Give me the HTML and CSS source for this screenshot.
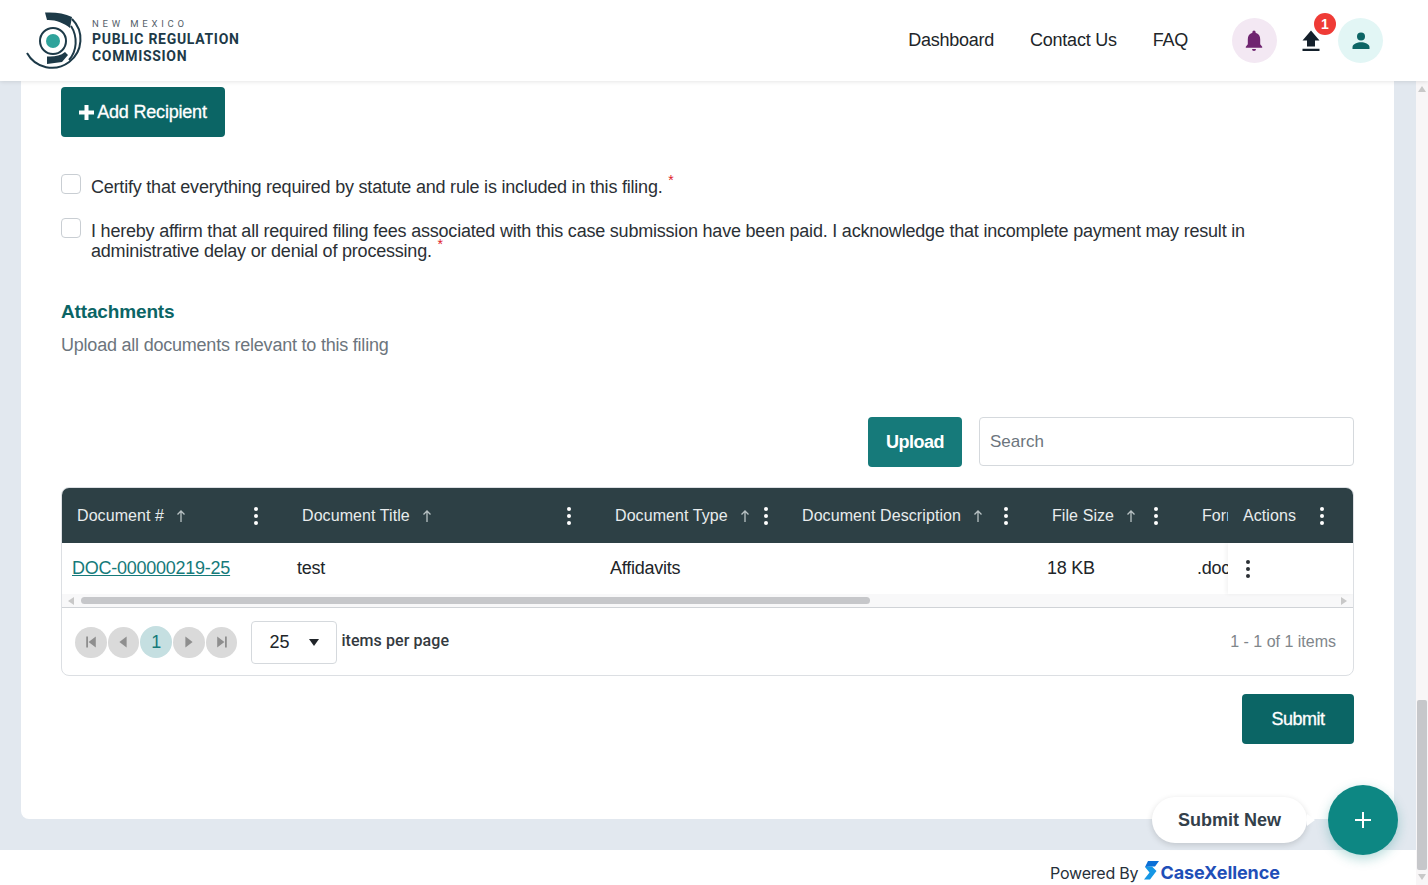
FILE: index.html
```html
<!DOCTYPE html>
<html lang="en">
<head>
    <meta charset="UTF-8">
    <title>Submit Filing</title>
    <link rel="stylesheet" href="styles.css">
</head>
<body>
<header class="topbar">
    <a class="logo" href="#">
        <svg class="logo-mark" width="60" height="60" viewBox="0 0 60 60" fill="none">
            <circle cx="28" cy="30" r="7" fill="#2fa39b"/>
            <circle cx="28" cy="30" r="13" stroke="#1d3a48" stroke-width="2"/>
            <path d="M20 1.500C30 1 39 2 47 6L45 17C39 12 30 8.500 22 9Z" fill="#1d3a48"/>
            <path d="M46 15C53 26 52 40 44 49" stroke="#1d3a48" stroke-width="2"/>
            <path d="M2 42A28.500 28.500 0 1 0 47 8" stroke="#1d3a48" stroke-width="2"/>
            <path d="M22 45.500C29 46 35 45 40 41L43 44L37 51L22 53Z" fill="#1d3a48"/>
        </svg>
        <span class="logo-text">
            <span class="logo-small">NEW MEXICO</span>
            <span class="logo-big">PUBLIC REGULATION</span>
            <span class="logo-big">COMMISSION</span>
        </span>
    </a>
    <nav class="nav">
        <a href="#">Dashboard</a>
        <a href="#">Contact Us</a>
        <a href="#">FAQ</a>
    </nav>
    <div class="tools">
        <span class="round round-bell">
            <svg width="20" height="22" viewBox="0 0 20 22"><path d="M10 0.500a1.600 1.600 0 0 1 1.600 1.600v.7c3 .8 4.600 3.300 4.600 6.400v5l2 2.600v1H1.800v-1l2-2.600v-5c0-3.100 1.600-5.600 4.600-6.400v-.7A1.600 1.600 0 0 1 10 .5zM8 19h4a2 2 0 0 1-4 0z" fill="#6f2470"/></svg>
        </span>
        <span class="upload">
            <svg width="20" height="22" viewBox="0 0 20 22"><path d="M10 .5L18.500 10.500H14V16.500H6V10.500H1.500ZM1.500 18.800H18.500V21H1.500Z" fill="#14202b"/></svg>
            <span class="badge">1</span>
        </span>
        <span class="round round-user">
            <svg width="20" height="20" viewBox="0 0 20 20"><circle cx="10" cy="5.500" r="4" fill="#0d6565"/><path d="M1.500 18v-2c0-3 5-4.700 8.500-4.700s8.500 1.700 8.500 4.700v2z" fill="#0d6565"/></svg>
        </span>
    </div>
</header>

<div class="page">
    <div class="page-main">
        <main class="content">
            <div class="card">
                <button class="btn btn-add">
                    <svg width="15" height="15" viewBox="0 0 15 15"><path d="M5.500 0H9.500V5.500H15V9.500H9.500V15H5.500V9.500H0V5.500H5.500Z" fill="#fff"/></svg>
                    Add Recipient
                </button>

                <label class="check">
                    <span class="box"></span>
                    <span>Certify that everything required by statute and rule is included in this filing. <sup class="req">*</sup></span>
                </label>
                <label class="check check-two">
                    <span class="box"></span>
                    <span>I hereby affirm that all required filing fees associated with this case submission have been paid. I acknowledge that incomplete payment may result in administrative delay or denial of processing. <sup class="req">*</sup></span>
                </label>

                <h2 class="title">Attachments</h2>
                <p class="sub">Upload all documents relevant to this filing</p>

                <div class="toolbar">
                    <button class="btn btn-upload">Upload</button>
                    <input class="search" type="text" placeholder="Search">
                </div>

                <div class="grid">
                    <div class="grid-row grid-head">
                        <div class="col col-1"><span>Document #</span><svg class="arrow" width="10" height="12" viewBox="0 0 10 12"><path d="M5 12V1M1.500 4.500L5 1L8.500 4.500"/></svg><i class="dots"></i></div>
                        <div class="col col-2"><span>Document Title</span><svg class="arrow" width="10" height="12" viewBox="0 0 10 12"><path d="M5 12V1M1.500 4.500L5 1L8.500 4.500"/></svg><i class="dots"></i></div>
                        <div class="col col-3"><span>Document Type</span><svg class="arrow" width="10" height="12" viewBox="0 0 10 12"><path d="M5 12V1M1.500 4.500L5 1L8.500 4.500"/></svg><i class="dots"></i></div>
                        <div class="col col-4"><span>Document Description</span><svg class="arrow" width="10" height="12" viewBox="0 0 10 12"><path d="M5 12V1M1.500 4.500L5 1L8.500 4.500"/></svg><i class="dots"></i></div>
                        <div class="col col-5"><span>File Size</span><svg class="arrow" width="10" height="12" viewBox="0 0 10 12"><path d="M5 12V1M1.500 4.500L5 1L8.500 4.500"/></svg><i class="dots"></i></div>
                        <div class="col col-6"><span>Format</span></div>
                        <div class="col col-act"><span>Actions</span><i class="dots"></i></div>
                    </div>
                    <div class="grid-row grid-body">
                        <div class="col col-1"><a href="#">DOC-000000219-25</a></div>
                        <div class="col col-2">test</div>
                        <div class="col col-3">Affidavits</div>
                        <div class="col col-4"></div>
                        <div class="col col-5">18 KB</div>
                        <div class="col col-6">.docx</div>
                        <div class="col col-act"><i class="dots dots-dark"></i></div>
                    </div>
                    <div class="hscroll">
                        <i class="tri tri-left"></i>
                        <div class="hscroll-track"><div class="hscroll-thumb"></div></div>
                        <i class="tri tri-right"></i>
                    </div>
                    <div class="pager">
                        <span class="pg"><svg width="12" height="12" viewBox="0 0 10 10"><path d="M1 0.500H2.500V9.500H1ZM9 0.500V9.500L3 5Z"/></svg></span>
                        <span class="pg"><svg width="12" height="12" viewBox="0 0 10 10"><path d="M8 0.500V9.500L2 5Z"/></svg></span>
                        <span class="pg pg-on">1</span>
                        <span class="pg"><svg width="12" height="12" viewBox="0 0 10 10"><path d="M2 0.500V9.500L8 5Z"/></svg></span>
                        <span class="pg"><svg width="12" height="12" viewBox="0 0 10 10"><path d="M1 0.500V9.500L7 5ZM7.500 0.500H9V9.500H7.500Z"/></svg></span>
                        <span class="size">25<i class="caret"></i></span>
                        <span class="per">items per page</span>
                        <span class="count">1 - 1 of 1 items</span>
                    </div>
                </div>

                <div class="actions">
                    <button class="btn btn-submit">Submit</button>
                </div>
            </div>
        </main>
        <footer class="footer">
            <span>Powered By</span>
            <svg width="15" height="20" viewBox="0 0 15 20"><path d="M4 1H15L11 6.500H8L1 7Z" fill="#0b6fd6"/><path d="M1 7L8 6.500L12.500 11L6 19.500H0L5.500 12.500Z" fill="#1597e5"/></svg>
            <b>CaseXellence</b>
        </footer>
    </div>
    <div class="vscroll">
        <i class="tri tri-up"></i>
        <div class="vscroll-track"><div class="vscroll-thumb"></div></div>
        <i class="tri tri-down"></i>
    </div>
</div>

<!-- floating button -->
<div class="fab-wrap">
    <span class="fab-tip">Submit New</span>
    <button class="fab">
        <svg width="18" height="18" viewBox="0 0 18 18"><path d="M9 1V17M1 9H17" stroke="#fff" stroke-width="2"/></svg>
    </button>
</div>
</body>
</html>
```

FILE: styles.css
```css
*{
    box-sizing: border-box;
}
html,body{
    height: 100%;
}
body{
    margin: 0;
    overflow: hidden;
    display: flex;
    flex-direction: column;
    font-family: "Liberation Sans", Arial, sans-serif;
    color: #212529;
    background: #fff;
}
a{
    text-decoration: none;
    color: inherit;
}
i{
    font-style: normal;
}
button{
    font-family: inherit;
    border: 0;
    cursor: pointer;
}

/*顶部*/
.topbar{
    height: 81px;
    flex: none;
    display: flex;
    align-items: center;
    background: #fff;
    box-shadow: 0 1px 4px rgba(0,0,0,0.1);
    position: relative;
    z-index: 2;
    padding: 0 45px 0 25px;
}
.logo{
    display: flex;
    align-items: center;
    gap: 7px;
}
.logo-text{
    display: flex;
    flex-direction: column;
    font-family: Roboto, sans-serif;
    color: #1d3a48;
}
.logo-small{
    font-size: 9.500px;
    letter-spacing: 3.800px;
    line-height: 14px;
    color: #55616a;
}
.logo-big{
    font-size: 14px;
    font-weight: 700;
    letter-spacing: 0.700px;
    line-height: 17px;
}
.nav{
    margin-left: auto;
    display: flex;
    gap: 36px;
    font-size: 18px;
    letter-spacing: -0.240px;
}
.tools{
    display: flex;
    align-items: center;
    margin-left: 44px;
}
.round{
    width: 45px;
    height: 45px;
    border-radius: 50%;
    display: flex;
    align-items: center;
    justify-content: center;
}
.round-bell{
    background: #f3e8f3;
}
.round-bell svg{
    margin-right: 1px;
}
.round-user{
    background: #e2f6f5;
}
.upload{
    width: 61px;
    height: 45px;
    display: flex;
    align-items: center;
    justify-content: center;
    position: relative;
    padding-left: 7px;
}
.badge{
    position: absolute;
    top: -5px;
    right: 2px;
    width: 22px;
    height: 22px;
    border-radius: 50%;
    background: #ef3b36;
    color: #fff;
    font-size: 14px;
    font-weight: 700;
    line-height: 22px;
    text-align: center;
}

/*主体*/
.page{
    flex: 1;
    min-height: 0;
    display: flex;
}
.page-main{
    flex: 1;
    min-width: 0;
    display: flex;
    flex-direction: column;
}
.content{
    flex: 1;
    background: #e2e8ef;
    padding: 0 22px 31px 21px;
    min-height: 0;
}
.card{
    height: 100%;
    background: #fff;
    border-radius: 0 0 8px 8px;
    padding: 6px 40px 0;
}
.btn{
    color: #fff;
    font-size: 18px;
    border-radius: 4px;
    letter-spacing: -0.500px;
}
.btn-add{
    width: 164px;
    height: 50px;
    background: #0b6565;
    display: flex;
    align-items: center;
    justify-content: center;
    gap: 3px;
    letter-spacing: -0.200px;
    -webkit-text-stroke: 0.3px #fff;
}
.check{
    display: flex;
    gap: 10px;
    font-size: 18px;
    line-height: 20px;
    letter-spacing: -0.210px;
    margin-top: 37px;
    color: #2b3035;
}
.check-two{
    margin-top: 21px;
}
.box{
    flex: none;
    width: 20px;
    height: 20px;
    border: 1px solid #c9ced3;
    border-radius: 4px;
    background: #fff;
}
.check > span:last-child{
    padding-top: 3px;
}
.req{
    color: #e0202a;
    font-size: 14px;
    line-height: 0;
    vertical-align: 8px;
    margin-left: 1px;
}
.title{
    margin: 39px 0 0;
    font-size: 19px;
    line-height: 24px;
    font-weight: 700;
    letter-spacing: -0.150px;
    color: #0b6565;
}
.sub{
    margin: 9px 0 0;
    font-size: 18px;
    line-height: 24px;
    color: #6c757d;
    letter-spacing: -0.220px;
}
.toolbar{
    margin-top: 60px;
    display: flex;
    justify-content: flex-end;
    gap: 17px;
}
.btn-upload{
    width: 94px;
    height: 50px;
    background: #167a7a;
    font-weight: 700;
}
.search{
    width: 375px;
    height: 49px;
    border: 1px solid #d5d9dd;
    border-radius: 4px;
    padding: 0 10px;
    font-family: inherit;
    font-size: 17px;
    outline: none;
}
.search::placeholder{
    color: #6c757d;
    opacity: 1;
}

/*表格*/
.grid{
    margin-top: 20px;
    height: 189px;
    border: 1px solid #dcdfe3;
    border-radius: 8px;
    overflow: hidden;
}
.grid-row{
    display: flex;
}
.grid-head{
    height: 56px;
    background: #2d4045;
    color: #e8eced;
    font-size: 16px;
    letter-spacing: 0.080px;
    margin-top: -1px;
}
.grid-head .col{
    padding-left: 15px;
    padding-top: 2px;
    padding-right: 29px;
}
.grid-head .col-3{
    padding-right: 19px;
}
.grid-head .col-6{
    padding-right: 0;
}
.grid-body{
    height: 51px;
    font-size: 18px;
    letter-spacing: -0.250px;
    color: #212529;
}
.grid-body .col{
    padding-left: 10px;
}
.grid-body .col-act{
    box-shadow: -2px 0 4px rgba(0,0,0,0.05);
    padding-left: 18px;
    background: #fff;
}
.col{
    display: flex;
    align-items: center;
    flex: none;
    padding-right: 28px;
    white-space: nowrap;
    overflow: hidden;
}
.col-1{
    width: 225px;
}
.col-2{
    width: 313px;
}
.col-3{
    width: 187px;
}
.col-4{
    width: 250px;
}
.col-5{
    width: 150px;
}
.col-6{
    width: 41px;
    padding-right: 0;
}
.col-act{
    width: 125px;
}
.grid-body a{
    color: #167a7a;
    text-decoration: underline;
}
.arrow{
    margin-left: 12px;
    flex: none;
    fill: none;
    stroke: #b8c2c4;
    stroke-width: 1.300;
}
.dots{
    margin-left: auto;
    flex: none;
    width: 4px;
    height: 4px;
    border-radius: 50%;
    background: #fff;
    box-shadow: 0 -7px 0 #fff, 0 7px 0 #fff;
}
.dots-dark{
    margin-left: 0;
    background: #2b3035;
    box-shadow: 0 -7px 0 #2b3035, 0 7px 0 #2b3035;
}
.hscroll{
    height: 14px;
    display: flex;
    align-items: center;
    background: #f8f8f9;
    border-bottom: 1px solid #d0d3d7;
    padding: 0 6px;
    gap: 7px;
}
.hscroll-track{
    flex: 1;
}
.hscroll-thumb{
    width: 789px;
    height: 7px;
    border-radius: 4px;
    background: #c6c7ca;
}
.tri{
    flex: none;
    width: 0;
    height: 0;
    border: 4px solid transparent;
}
.tri-left{
    border-left: 0;
    border-right: 6px solid #c8c8c8;
}
.tri-right{
    border-right: 0;
    border-left: 6px solid #c8c8c8;
}
.tri-up{
    border-top: 0;
    border-bottom: 6px solid #c8c8c8;
}
.tri-down{
    border-bottom: 0;
    border-top: 6px solid #c8c8c8;
}

/*分页*/
.pager{
    height: 68px;
    display: flex;
    align-items: center;
    padding: 0 17px 0 13px;
    gap: 1px;
}
.pg{
    width: 31.600px;
    height: 31px;
    border-radius: 50%;
    background: #dadada;
    display: flex;
    align-items: center;
    justify-content: center;
    fill: #8e8e8e;
}
.pg-on{
    width: 32px;
    height: 32px;
    background: #c5dfe1;
    color: #167a7a;
    font-size: 18px;
}
.size{
    width: 86px;
    height: 43px;
    margin-left: 13px;
    border: 1px solid #d5d9dd;
    border-radius: 4px;
    display: flex;
    align-items: center;
    justify-content: space-between;
    padding: 0 17px;
    font-size: 18px;
}
.caret{
    width: 0;
    height: 0;
    border: 5px solid transparent;
    border-top: 7px solid #212529;
    border-bottom: 0;
}
.per{
    margin-left: 3px;
    margin-bottom: 3px;
    font-family: Roboto, sans-serif;
    font-size: 16px;
    font-weight: 500;
    letter-spacing: 0.080px;
    color: #343a40;
}
.count{
    margin-left: auto;
    font-size: 16px;
    color: #80868b;
}
.actions{
    margin-top: 18px;
    display: flex;
    justify-content: flex-end;
}
.btn-submit{
    width: 112px;
    height: 50px;
    background: #0b6565;
    -webkit-text-stroke: 0.3px #fff;
}

/*底部*/
.footer{
    height: 35px;
    flex: none;
    background: #fff;
    display: flex;
    align-items: center;
    padding: 11px 0 0 1050px;
    font-family: Inter, sans-serif;
    font-size: 16px;
    letter-spacing: -0.200px;
    color: #26303a;
    gap: 6px;
}
.footer svg{
    margin-top: -7px;
    margin-right: -5px;
}
.footer b{
    font-size: 18px;
    color: #1f4fb8;
    font-weight: 700;
    letter-spacing: -0.100px;
    margin-top: -1px;
}

/*右侧滚动条*/
.vscroll{
    width: 12px;
    flex: none;
    background: #f8f6f7;
    display: flex;
    flex-direction: column;
    align-items: center;
    padding: 5px 0;
}
.vscroll-track{
    flex: 1;
    width: 100%;
    display: flex;
    flex-direction: column;
    justify-content: flex-end;
    padding: 0 1px 4px;
}
.vscroll-thumb{
    height: 170px;
    border-radius: 2px;
    background: #c6c7ca;
}

/*悬浮按钮*/
.fab-wrap{
    position: absolute;
    right: 30px;
    bottom: 30px;
    display: flex;
    align-items: center;
    gap: 21px;
    z-index: 3;
}
.fab-tip{
    position: relative;
    width: 155px;
    height: 46px;
    border-radius: 23px;
    background: #fff;
    box-shadow: 0 2px 6px rgba(0,0,0,0.15);
    display: flex;
    align-items: center;
    justify-content: center;
    font-size: 18px;
    font-weight: 700;
    color: #33404a;
}
.fab-tip::after{
    content: "";
    position: absolute;
    right: -8px;
    top: 17px;
    border: 6px solid transparent;
    border-left: 8px solid #fff;
    border-right: 0;
}
.fab{
    width: 70px;
    height: 70px;
    border-radius: 50%;
    background: #0d8783;
    box-shadow: 0 4px 12px rgba(13,135,131,0.3);
    display: flex;
    align-items: center;
    justify-content: center;
}
```
